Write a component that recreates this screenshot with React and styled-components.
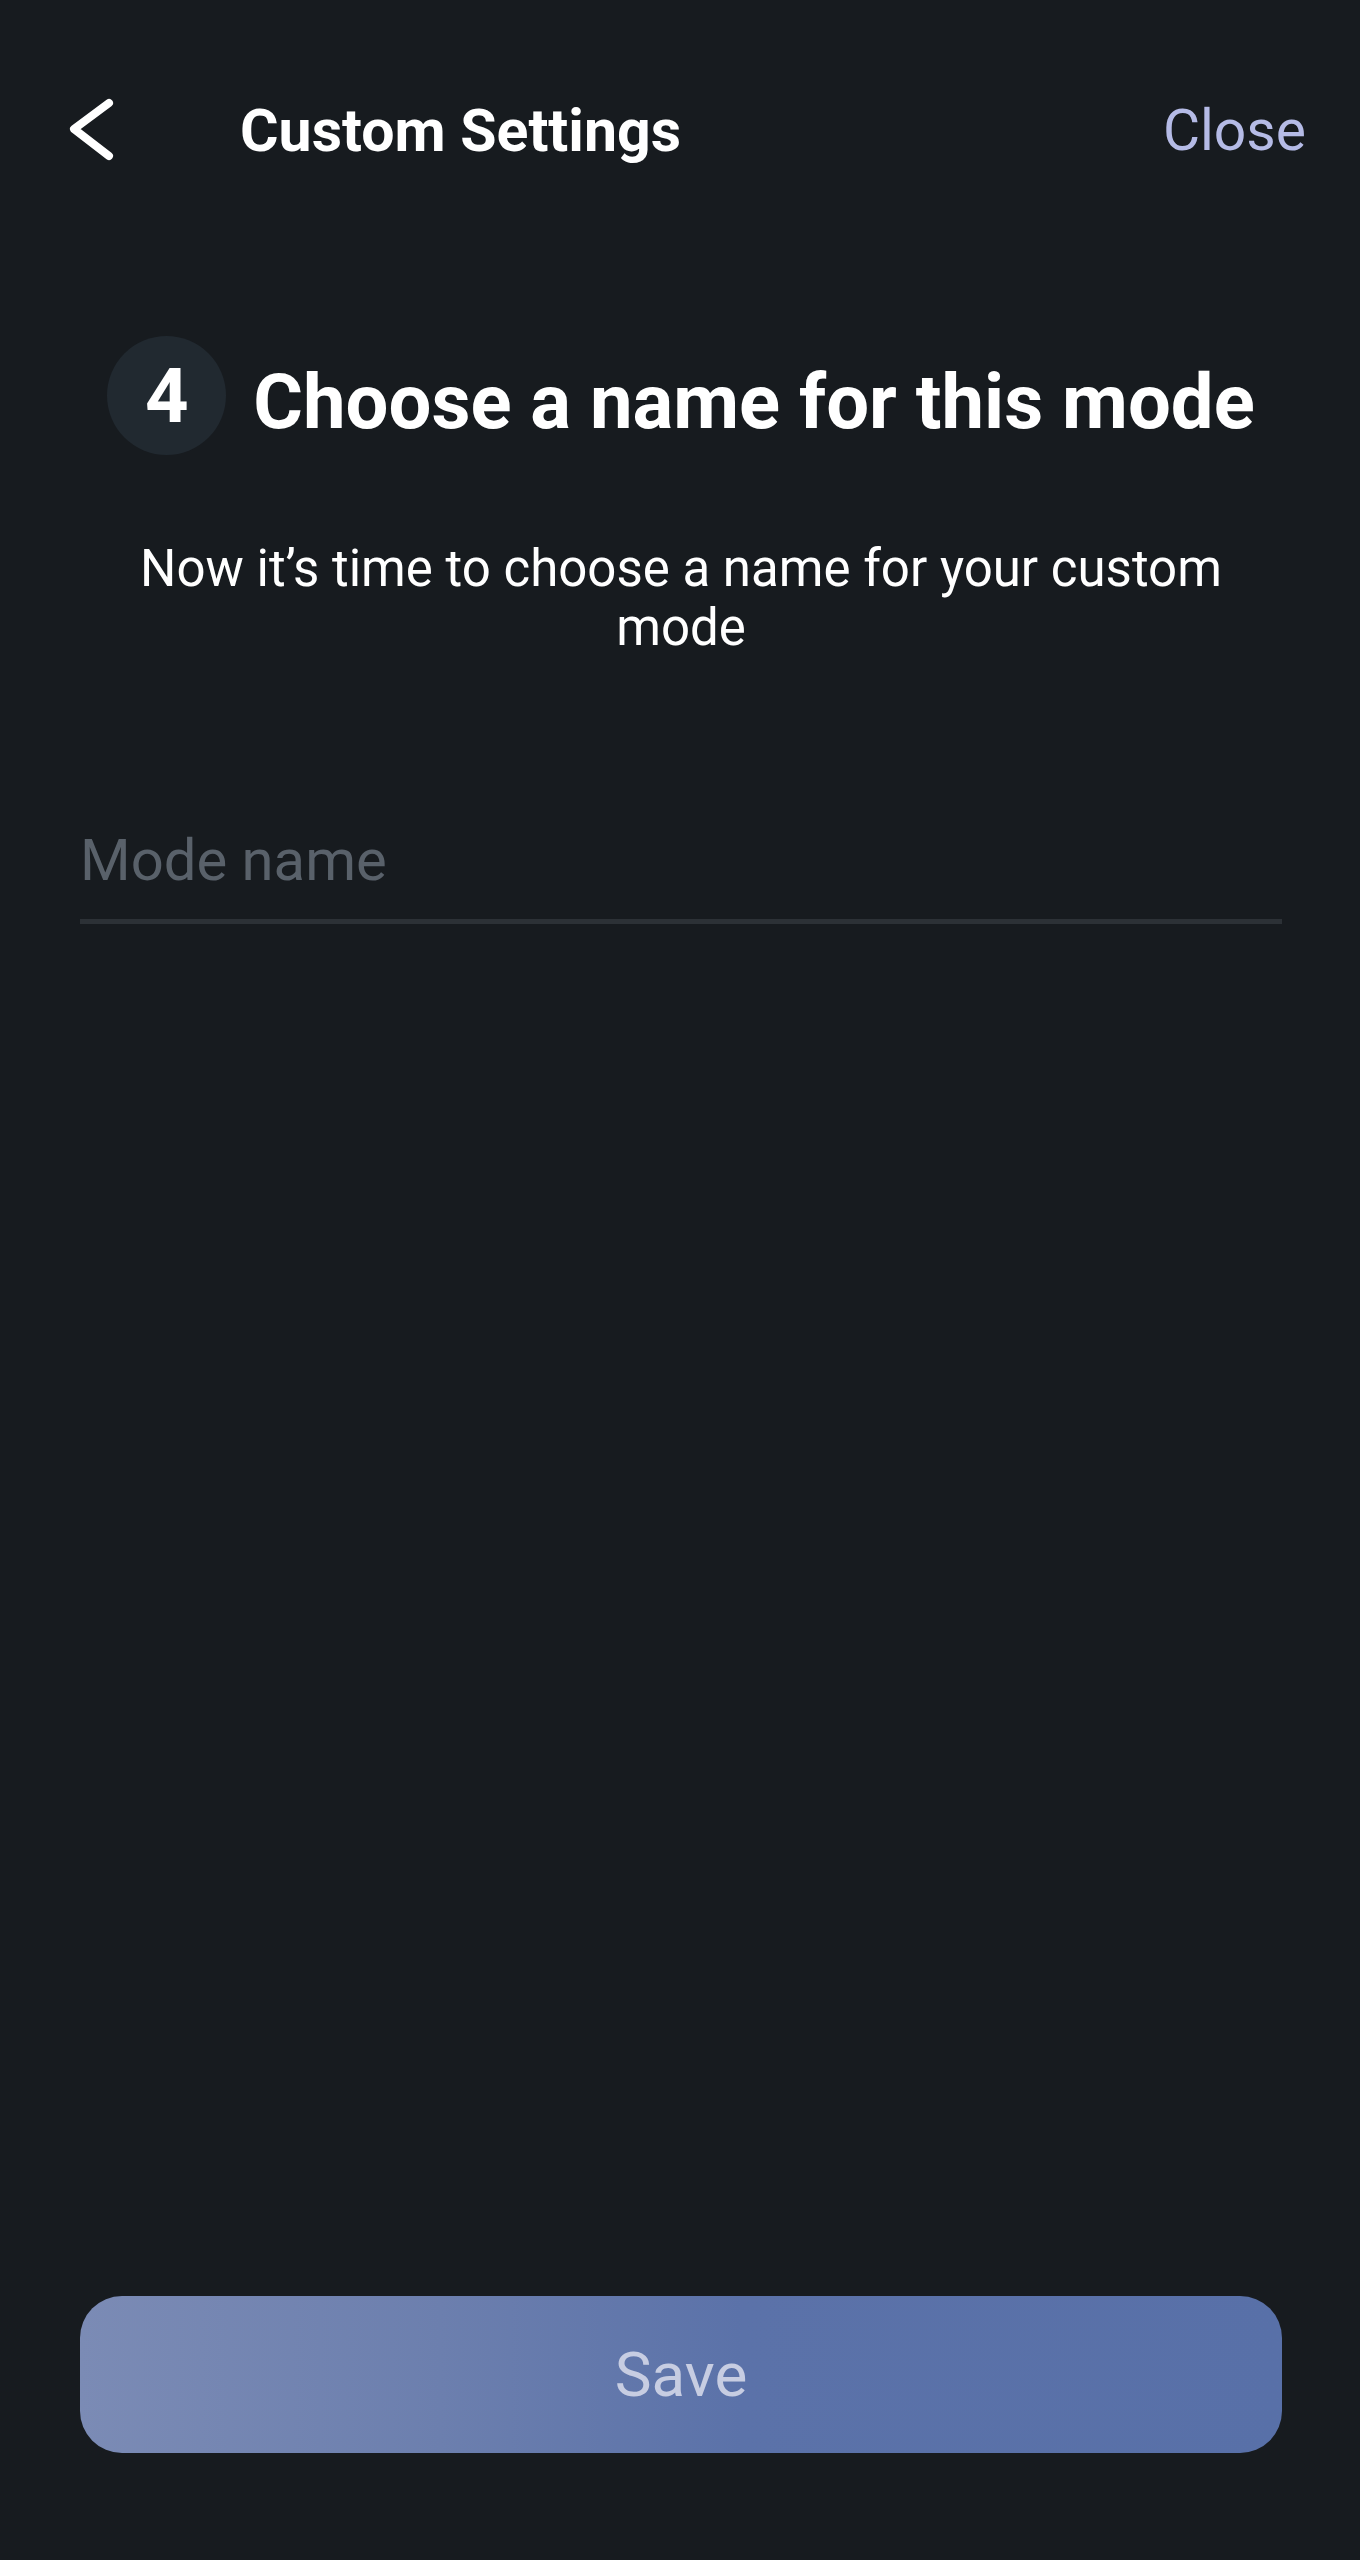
import React from "react";
import styled, { createGlobalStyle } from "styled-components";

const Global = createGlobalStyle`
  html, body {
    margin: 0;
    padding: 0;
    background: #171b1f;
  }
  body {
    font-family: Roboto, "Noto Sans", "Liberation Sans", sans-serif;
    color: #ffffff;
  }
  * { box-sizing: border-box; }
`;

const Screen = styled.div`
  width: 1360px;
  height: 2560px;
  background: #171b1f;
  display: flex;
  flex-direction: column;
`;

const Header = styled.header`
  height: 258px;
  display: flex;
  align-items: center;
  padding: 2px 54px 0 69px;
`;

const BackButton = styled.button`
  width: 46px;
  height: 64px;
  padding: 0;
  border: none;
  background: transparent;
  display: flex;
  align-items: center;
  justify-content: flex-start;
  cursor: pointer;
`;

const Title = styled.h1`
  margin: 0 0 0 125px;
  font-size: 59px;
  font-weight: 700;
  color: #ffffff;
  flex: 1;
`;

const CloseLink = styled.button`
  border: none;
  background: transparent;
  padding: 0;
  font-family: inherit;
  font-size: 57px;
  font-weight: 400;
  color: #b5bbe6;
  cursor: pointer;
`;

const Content = styled.main`
  flex: 1;
  display: flex;
  flex-direction: column;
  align-items: stretch;
  padding: 78px 78px 0 80px;
`;

const StepRow = styled.div`
  display: flex;
  align-items: center;
  justify-content: center;
  gap: 27px;
`;

const StepBadge = styled.div`
  flex: none;
  width: 119px;
  height: 119px;
  border-radius: 50%;
  background: #212930;
  display: flex;
  align-items: center;
  justify-content: center;
  font-size: 76px;
  font-weight: 700;
  color: #ffffff;
`;

const Heading = styled.h2`
  margin: 12px 0 0;
  font-size: 76px;
  font-weight: 700;
  color: #ffffff;
`;

const Subtitle = styled.p`
  margin: 84px auto 0;
  max-width: 1120px;
  text-align: center;
  font-size: 51px;
  line-height: 59px;
  font-weight: 400;
  color: #ffffff;
`;

const Field = styled.label`
  display: block;
  margin-top: 169px;
`;

const Input = styled.input`
  display: block;
  width: 100%;
  border: none;
  border-bottom: 5px solid #2c3136;
  background: transparent;
  padding: 0 0 25px;
  font-family: inherit;
  font-size: 58px;
  color: #ffffff;
  outline: none;

  &::placeholder {
    color: #59616a;
  }
`;

const Spacer = styled.div`
  flex: 1;
`;

const SaveButton = styled.button`
  height: 157px;
  margin-bottom: 107px;
  border: none;
  border-radius: 42px;
  background: linear-gradient(90deg, #7b8bb5 0%, #6c7fae 30%, #5b72a9 55%, #5870a8 100%);
  font-family: inherit;
  font-size: 62px;
  font-weight: 400;
  color: #c7cde2;
  cursor: pointer;
`;

function ChevronLeft() {
  return (
    <svg width="46" height="64" viewBox="0 0 46 64" fill="none">
      <path
        d="M40 5 L5 31 L40 58"
        stroke="#ffffff"
        strokeWidth="8"
        strokeLinecap="round"
        strokeLinejoin="round"
      />
    </svg>
  );
}

export default function App() {
  return (
    <>
      <Global />
      <Screen>
        <Header>
          <BackButton aria-label="Back">
            <ChevronLeft />
          </BackButton>
          <Title>Custom Settings</Title>
          <CloseLink>Close</CloseLink>
        </Header>
        <Content>
          <StepRow>
            <StepBadge>4</StepBadge>
            <Heading>Choose a name for this mode</Heading>
          </StepRow>
          <Subtitle>Now it’s time to choose a name for your custom mode</Subtitle>
          <Field>
            <Input placeholder="Mode name" />
          </Field>
          <Spacer />
          <SaveButton>Save</SaveButton>
        </Content>
      </Screen>
    </>
  );
}
